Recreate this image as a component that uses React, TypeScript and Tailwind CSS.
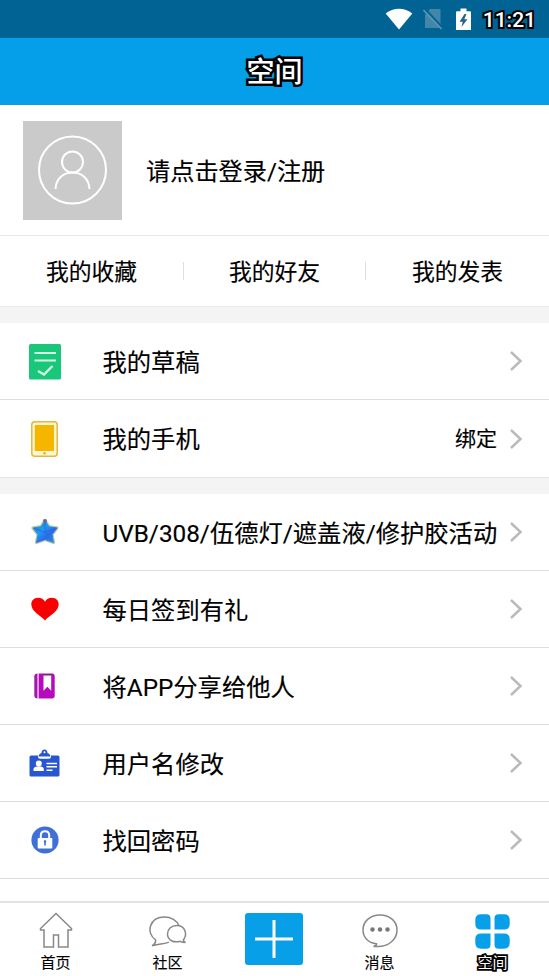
import type { ReactNode } from "react";

const outlined = "text-white [paint-order:stroke_fill]";

function Chevron() {
  return (
    <svg className="h-[22px] w-[14px] shrink-0" viewBox="0 0 14 22" fill="none" stroke="#bababa" strokeWidth="2.500">
      <path d="M2 2 11.500 11 2 20" />
    </svg>
  );
}

function DraftIcon() {
  return (
    <svg className="mt-[1px]" width="32" height="36" viewBox="0 0 32 36">
      <rect width="32" height="35.500" rx="1.500" fill="#18c779" />
      <path d="M5.500 9h21.500M5.500 16.500h21.500" stroke="#d5fae6" strokeWidth="2.200" />
      <path d="m9 27 6 3.500 8.500-8.500" fill="none" stroke="#d5fae6" strokeWidth="2.400" />
    </svg>
  );
}

function PhoneIcon() {
  return (
    <svg width="27" height="36" viewBox="0 0 27 36">
      <rect x=".8" y=".8" width="25.400" height="34.400" rx="3" fill="#fff6d2" stroke="#e4b63d" strokeWidth="1.500" />
      <rect x="3.800" y="4" width="19.200" height="26" fill="#f6b600" />
      <circle cx="13.500" cy="32.200" r="1.300" fill="#e8ae20" />
    </svg>
  );
}

function StarIcon() {
  return (
    <svg width="30" height="30" viewBox="0 0 30 30">
      <defs>
        <linearGradient id="star" x1="0" y1="0" x2="1" y2="1">
          <stop offset="0" stopColor="#2b72c9" />
          <stop offset=".4" stopColor="#179ff2" />
          <stop offset=".65" stopColor="#2a6be9" />
          <stop offset="1" stopColor="#21a4e7" />
        </linearGradient>
      </defs>
      <path d="m15 3.500 4 6.300 8 1.200-5 6.500 1.500 8-8.500-3-8.500 3 1.500-8-5-6.500 8-1.200Z" fill="url(#star)" stroke="#c9cba0" strokeWidth="3.400" strokeLinejoin="round" />
      <path d="m15 3.500 4 6.300 8 1.200-5 6.500 1.500 8-8.500-3-8.500 3 1.500-8-5-6.500 8-1.200Z" fill="url(#star)" stroke="url(#star)" strokeWidth="1" strokeLinejoin="round" />
      <path d="M15 5v10.500L5 11.500M15 15.500l10-4M15 15.500l7 8" fill="none" stroke="#3f5cdf" strokeWidth=".9" />
      <circle cx="15" cy="3.800" r="1.900" fill="#6b6490" />
    </svg>
  );
}

function HeartIcon() {
  return (
    <svg width="28" height="24" viewBox="0 0 28 24">
      <path d="M14 23.500C9.500 18.500.3 14.700.3 7.300.3 3.500 3 .7 7.200.7c3.100 0 5.400 1.400 6.800 4 1.400-2.600 3.700-4 6.800-4 4.200 0 6.900 2.800 6.900 6.600 0 7.400-9.200 11.200-13.700 16.200Z" fill="#f90000" />
    </svg>
  );
}

function BookIcon() {
  return (
    <svg width="21" height="26" viewBox="0 0 21 26">
      <path d="M3.500.5v25C1.500 25.500.3 24.500.3 22.500v-19C.3 1.500 1.500.5 3.500.5Z" fill="#a317aa" />
      <path d="M4.600.5H18c1.800 0 2.700.9 2.700 2.700v19.600c0 1.800-.9 2.700-2.700 2.700H4.600Z" fill="#b60bbd" />
      <path d="M9.500 2.500h7.700v15.300l-3.800-4-3.900 4Z" fill="#fff" />
      <path d="M9 1.600h10" stroke="#66356c" strokeWidth="1" />
    </svg>
  );
}

function BadgeIcon() {
  return (
    <svg width="31" height="28" viewBox="0 0 31 28">
      <rect x=".5" y="6.500" width="30" height="21" rx="1.500" fill="#2856d1" />
      <path d="M9 6.300h13v1.500c0 1.200-.8 2-2 2h-9c-1.200 0-2-.8-2-2Z" fill="#fff" />
      <path d="M9.700 7.500c0-1.800 1.100-2.900 2.700-3.200C12.500 1.800 13.600.5 15.500.5s3 1.300 3.100 3.800c1.600.3 2.700 1.400 2.700 3.200Z" fill="#2856d1" />
      <circle cx="15.500" cy="3.300" r="1" fill="#fff" />
      <circle cx="9.800" cy="14.500" r="3" fill="#fff" />
      <path d="M4.500 22v-2c0-1.700 2-2.800 5.300-2.800s5 1.100 5 2.800v2Z" fill="#fff" />
      <path d="M17.500 14.500H28M17.500 17.800H28M17.500 21.200h6" stroke="#fff" strokeWidth="1.400" />
    </svg>
  );
}

function LockIcon() {
  return (
    <svg width="28" height="28" viewBox="0 0 28 28">
      <circle cx="14" cy="14" r="13.600" fill="#3f70d8" />
      <path d="M9.800 13V9.500C9.800 7 11.300 5.200 14 5.200s4.200 1.800 4.200 4.300V13" fill="none" stroke="#fff" strokeWidth="2" />
      <rect x="6.700" y="12" width="14.600" height="10.500" rx=".7" fill="#fff" />
      <path d="M14 14.500v5" stroke="#3f70d8" strokeWidth="1.600" />
      <circle cx="14" cy="15.500" r="1.200" fill="#3f70d8" />
    </svg>
  );
}

function Row({ icon, label, value, last }: { icon: ReactNode; label: string; value?: string; last?: boolean }) {
  return (
    <div className={`flex h-[77px] shrink-0 items-center bg-white pr-[26px] ${last ? "" : "border-b border-[#dedede]"}`}>
      <div className="flex w-[89px] shrink-0 justify-center">{icon}</div>
      <div className="ml-[13.500px] flex-1 whitespace-nowrap pt-[3px] text-[24.300px] leading-[36px]">{label}</div>
      {value && <div className="mr-[12px] pt-[3px] text-[21px]">{value}</div>}
      <Chevron />
    </div>
  );
}

function NavItem({ icon, label, active, className }: { icon: ReactNode; label: string; active?: boolean; className: string }) {
  return (
    <div className={`flex flex-col items-center pt-[8px] ${className}`}>
      <div className="flex h-[41px] items-center">{icon}</div>
      <div className={`text-[15px] leading-[22px] ${active ? `${outlined} [-webkit-text-stroke:3.500px_#000]` : ""}`}>{label}</div>
    </div>
  );
}

export default function App() {
  return (
    <div className="flex h-[976px] w-[549px] flex-col overflow-hidden bg-white font-['Roboto','Noto_Sans_CJK_SC',sans-serif] text-black [-webkit-text-stroke:0.15px_#000]">
      <div className="flex h-[38px] shrink-0 items-center justify-end bg-[#006394] pr-[13px]">
        <svg className="mr-[10px]" width="28" height="22" viewBox="0 0 28 22">
          <path d="M.7 5.500C8-1 20-1 27.300 5.500L14 21.500Z" fill="#fff" />
        </svg>
        <svg className="mr-[13px]" width="20" height="22" viewBox="0 0 20 22">
          <path d="M7 1h10.500v19H2V7Z" fill="#4386a8" />
          <path d="m2 1 18 19" stroke="#006394" strokeWidth="2" />
          <path d="m.5 2 18 19" stroke="#5b96b2" strokeWidth="1.600" />
        </svg>
        <svg className="mr-[12px]" width="15" height="23" viewBox="0 0 15 23">
          <path d="M4.500.5h6v2.700H14a1 1 0 0 1 1 1V22H0V4.200a1 1 0 0 1 1-1h3.500Z" fill="#fff" />
          <path d="M8.500 6 3.500 13.700h3.200L5.500 19l6-7.700H8.300L10.500 6Z" fill="#286582" />
        </svg>
        <div className={`pt-[1px] text-[21px] leading-[30px] font-medium ${outlined} [-webkit-text-stroke:4px_#000]`}>11:21</div>
      </div>
      <header className="flex h-[67px] shrink-0 items-center justify-center bg-[#049fe8]">
        <h1 className={`pt-[3px] text-[28px] leading-[40px] font-medium ${outlined} [-webkit-text-stroke:5px_#000]`}>空间</h1>
      </header>
      <section className="flex h-[131px] shrink-0 items-center border-b border-[#e7e7e7] pl-[23px]">
        <div className="flex h-[99px] w-[99px] items-center justify-center bg-[#cacaca]">
          <svg width="70" height="70" viewBox="0 0 70 70" fill="none" stroke="#fff" strokeWidth="2">
            <circle cx="34.500" cy="35" r="33.500" />
            <circle cx="34.500" cy="27" r="10.500" />
            <path d="M17.500 54C18 44 25 37.500 34.500 37.500S51 44 51.500 54" />
          </svg>
        </div>
        <div className="ml-[24px] pt-[3px] text-[24.200px] leading-[36px]">请点击登录/注册</div>
      </section>
      <section className="grid h-[70px] shrink-0 grid-cols-3 items-center text-center text-[22.800px]">
        <div className="pt-[3px] leading-[34px]">我的收藏</div>
        <div className="flex h-[18px] items-center justify-center border-x border-[#dedede] pt-[3px] leading-[34px]">我的好友</div>
        <div className="pt-[3px] leading-[34px]">我的发表</div>
      </section>
      <div className="h-[17px] shrink-0 border-t border-[#ebebeb] bg-[#f4f4f4]" />
      <Row icon={<DraftIcon />} label="我的草稿" />
      <Row icon={<PhoneIcon />} label="我的手机" value="绑定" last />
      <div className="h-[17px] shrink-0 border-t border-[#e5e5e5] bg-[#f4f4f4]" />
      <Row icon={<StarIcon />} label="UVB/308/伍德灯/遮盖液/修护胶活动" />
      <Row icon={<HeartIcon />} label="每日签到有礼" />
      <Row icon={<BookIcon />} label="将APP分享给他人" />
      <Row icon={<BadgeIcon />} label="用户名修改" />
      <Row icon={<LockIcon />} label="找回密码" />
      <nav className="mt-auto flex h-[75px] shrink-0 border-t-2 border-[#e2e2e2] bg-white">
        <NavItem
          className="w-[111px]"
          label="首页"
          icon={
            <svg className="-mt-[3px]" width="34" height="36" viewBox="0 0 34 36" fill="none" stroke="#888" strokeWidth="1.500">
              <path d="M17 1.500 1.500 16.500v1.500h3.500v17h9.500v-12h5v12H29v-17h3.500v-1.500Z" />
            </svg>
          }
        />
        <NavItem
          className="w-[113px]"
          label="社区"
          icon={
            <svg width="38" height="31" viewBox="0 0 38 31" fill="none" stroke="#888" strokeWidth="1.500">
              <path d="M20 26c-2.500 2-9 1.300-17 3.800 3.300-2 4-4 3.500-6C-3.500 17 .5 1 15.500 1 22 1 28 4.500 29.800 9.500" />
              <path d="M36.500 26.500c-2-.7-2.300-1.700-2-2.800C38.500 19 36.500 9.500 28 9.500c-6 0-9.500 4-9.500 8.500 0 6.500 6.500 9 12.500 7.300 1.500.8 3 1.200 5.500 1.200Z" />
            </svg>
          }
        />
        <div className="flex w-[99px] justify-center pt-[10px]">
          <div className="flex h-[52px] w-[58px] items-center justify-center rounded-[3px] bg-[#079fe8]">
            <svg width="38" height="38" viewBox="0 0 38 38" stroke="#fff" strokeWidth="3">
              <path d="M19 0v38M0 19h38" />
            </svg>
          </div>
        </div>
        <NavItem
          className="w-[113px]"
          label="消息"
          icon={
            <svg className="-mt-[2px]" width="36" height="34" viewBox="0 0 36 34" fill="none" stroke="#888" strokeWidth="1.500">
              <path d="M11.500 32.500c2.500-.6 3.300-1.500 3-2.800C6 29 1 23 1 16 1 7 8.500 1 18 1s17 6 17 15c0 10-9 16.500-19 16.500Z" />
              <g fill="#777" stroke="none"><circle cx="10.500" cy="15.500" r="2.200" /><circle cx="18" cy="15.500" r="2.200" /><circle cx="25.500" cy="15.500" r="2.200" /></g>
            </svg>
          }
        />
        <NavItem
          className="w-[113px]"
          label="空间"
          active
          icon={
            <svg className="-mt-[1px]" width="35" height="35" viewBox="0 0 35 35" fill="#079fe8">
              <path d="M6 .3h5.500q4 0 4 4v11.200H6q-5.700 0-5.700-5.500V6Q.3.300 6 .3ZM23.500.3H29Q34.700.300 34.700 6v4q0 5.500-5.500 5.500H19.500V4.300q0-4 4-4ZM6 19.500h9.500v11.200q0 4-4 4H6Q.3 34.700.3 29v-4q0-5.500 5.700-5.500ZM19.500 19.500h9.700q5.500 0 5.500 5.500v4q0 5.700-5.700 5.700h-5.500q-4 0-4-4Z" />
            </svg>
          }
        />
      </nav>
    </div>
  );
}
